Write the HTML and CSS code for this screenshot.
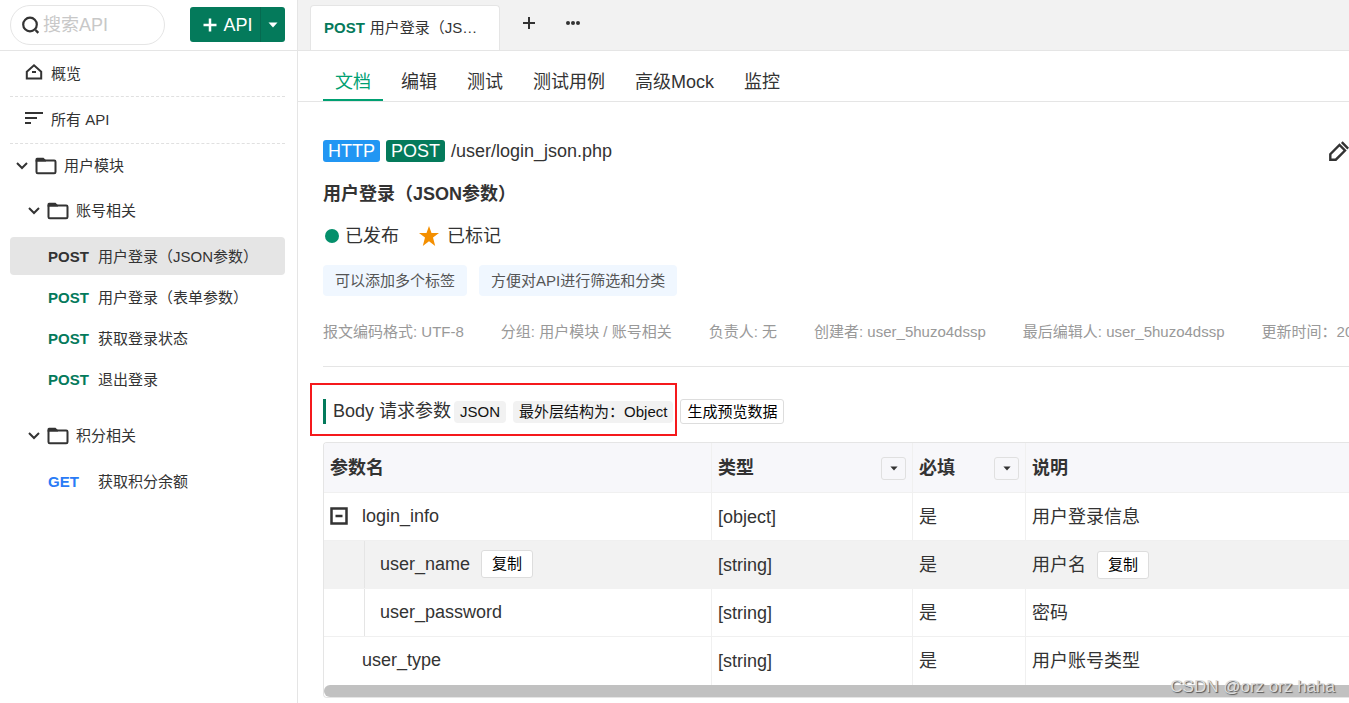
FILE: index.html
```html
<!DOCTYPE html>
<html lang="zh-CN">
<head>
<meta charset="utf-8">
<title>用户登录（JSON参数）</title>
<link rel="stylesheet" href="styles.css">
</head>
<body>
<svg class="sprite" aria-hidden="true">
  <symbol id="chevron" viewBox="0 0 12 12"><path d="M1 3l5 5 5-5" fill="none" stroke="#333" stroke-width="2"/></symbol>
  <symbol id="folder" viewBox="0 0 22 18"><path d="M1.500 4v11a1.300 1.300 0 0 0 1.300 1.300h16.400a1.300 1.300 0 0 0 1.300-1.300V4.800a1.300 1.300 0 0 0-1.300-1.300H2z" fill="none" stroke="#333" stroke-width="2"/><path d="M.5 4.500V2.200A1.500 1.500 0 0 1 2 .7h6.500l2.500 2.500v1.300z" fill="#333"/></symbol>
  <symbol id="caret" viewBox="0 0 10 6"><path d="M.5.500h9L5 5.500z" fill="currentColor"/></symbol>
</svg>
<div class="app">
  <aside class="sidebar">
    <div class="side-top">
      <label class="search">
        <svg width="19" height="19" viewBox="0 0 19 19"><circle cx="8" cy="8.500" r="6.800" fill="none" stroke="#333" stroke-width="2.200"/><path d="M13.500 14l2.800 2.800" stroke="#333" stroke-width="2.400"/></svg>
        <input type="text" placeholder="搜索API" aria-label="搜索API">
      </label>
      <div class="add">
        <button class="add-main" type="button"><svg width="14" height="14" viewBox="0 0 14 14"><path d="M7 .5v13M.5 7h13" stroke="#fff" stroke-width="2.500"/></svg>API</button>
        <button class="add-more" type="button" aria-label="更多"><svg width="10" height="6"><use href="#caret"/></svg></button>
      </div>
    </div>
    <nav class="tree">
      <a class="link" href="#"><svg width="18" height="18" viewBox="0 0 18 18"><path d="M1.800 8.700L9 2.300l7.200 6.400V15.500H1.800z" fill="none" stroke="#333" stroke-width="2"/><path d="M7 9h4" stroke="#333" stroke-width="2"/></svg>概览</a>
      <a class="link" href="#"><svg width="18" height="18" viewBox="0 0 18 18"><path d="M0 4h18M0 9h12M0 14h6" stroke="#333" stroke-width="2"/></svg>所有 API</a>
      <a class="group" href="#"><svg width="12" height="12"><use href="#chevron"/></svg><svg width="22" height="18"><use href="#folder"/></svg>用户模块</a>
      <a class="group nested" href="#"><svg width="12" height="12"><use href="#chevron"/></svg><svg width="22" height="18"><use href="#folder"/></svg>账号相关</a>
      <div class="apis">
        <a class="api active" href="#"><b>POST</b>用户登录（JSON参数）</a>
        <a class="api" href="#"><b>POST</b>用户登录（表单参数）</a>
        <a class="api" href="#"><b>POST</b>获取登录状态</a>
        <a class="api" href="#"><b>POST</b>退出登录</a>
      </div>
      <a class="group nested" href="#"><svg width="12" height="12"><use href="#chevron"/></svg><svg width="22" height="18"><use href="#folder"/></svg>积分相关</a>
      <div class="apis">
        <a class="api get" href="#"><b>GET</b>获取积分余额</a>
      </div>
    </nav>
  </aside>
  <main class="main">
    <div class="files">
      <a class="file" href="#"><b>POST</b><span>用户登录（JSON参数）</span></a>
      <button class="icon" type="button" aria-label="新建"><svg width="14" height="14" viewBox="0 0 14 14"><path d="M7 1v12M1 7h12" stroke="#333" stroke-width="2"/></svg></button>
      <button class="icon" type="button" aria-label="更多"><svg width="14" height="4" viewBox="0 0 14 4"><circle cx="2" cy="2" r="2"/><circle cx="7" cy="2" r="2"/><circle cx="12" cy="2" r="2"/></svg></button>
    </div>
    <nav class="tabs">
      <a class="tab on" href="#">文档</a><a class="tab" href="#">编辑</a><a class="tab" href="#">测试</a><a class="tab" href="#">测试用例</a><a class="tab" href="#">高级Mock</a><a class="tab" href="#">监控</a>
    </nav>
    <section class="doc">
      <div class="url">
        <span class="badge http">HTTP</span><span class="badge">POST</span><span>/user/login_json.php</span>
        <button class="edit" type="button" aria-label="编辑"><svg width="20" height="20" viewBox="0 0 20 20"><path d="M1.300 18.700v-5.500l9.200-9.200 5.500 5.500-9.200 9.200zM12.800 1.200l6.400 6.400" fill="none" stroke="#333" stroke-width="2.400"/></svg></button>
      </div>
      <h1 class="title">用户登录（JSON参数）</h1>
      <div class="status">
        <span class="dot"></span><span>已发布</span>
        <svg class="star" width="20" height="20" viewBox="0 0 20 20"><path d="M10 0l2.500 7H20l-6 4.600L16.200 20 10 15.200 3.800 20 6 11.600 0 7h7.500z" fill="#f48f00"/></svg><span>已标记</span>
      </div>
      <div class="labels"><span class="label">可以添加多个标签</span><span class="label">方便对API进行筛选和分类</span></div>
      <div class="meta"><span>报文编码格式: UTF-8</span><span>分组: 用户模块 / 账号相关</span><span>负责人: 无</span><span>创建者: user_5huzo4dssp</span><span>最后编辑人: user_5huzo4dssp</span><span>更新时间：20</span></div>
      <div class="body-head">
        <h2 class="body-title">Body 请求参数</h2>
        <span class="chip">JSON</span><span class="chip">最外层结构为：Object</span>
        <button class="btn preview" type="button">生成预览数据</button>
        <div class="mark"></div>
      </div>
      <div class="grid">
        <table>
          <thead><tr>
            <th class="c-name">参数名</th>
            <th class="c-type"><div class="th">类型<button class="filter" type="button" aria-label="筛选类型"><svg width="8" height="5"><use href="#caret"/></svg></button></div></th>
            <th class="c-req"><div class="th">必填<button class="filter" type="button" aria-label="筛选必填"><svg width="8" height="5"><use href="#caret"/></svg></button></div></th>
            <th>说明</th>
          </tr></thead>
          <tbody>
            <tr><td><div class="name"><button class="fold" type="button" aria-label="收起"><svg width="18" height="18" viewBox="0 0 18 18"><path d="M1.500 1.500h15v15h-15z" fill="none" stroke="#333" stroke-width="2.500"/><path d="M5.500 9h7" stroke="#333" stroke-width="2.500"/></svg></button>login_info</div></td><td>[object]</td><td>是</td><td>用户登录信息</td></tr>
            <tr class="hover"><td class="child"><div class="inner">user_name<button class="btn copy" type="button">复制</button></div></td><td>[string]</td><td>是</td><td><div class="value">用户名<button class="btn copy" type="button">复制</button></div></td></tr>
            <tr><td class="child"><div class="inner">user_password</div></td><td>[string]</td><td>是</td><td>密码</td></tr>
            <tr><td><div class="name leaf">user_type</div></td><td>[string]</td><td>是</td><td>用户账号类型</td></tr>
          </tbody>
        </table>
        <div class="scroll"></div>
      </div>
    </section>
  </main>
  <div class="watermark">CSDN @orz orz haha</div>
</div>
</body>
</html>
```
FILE: styles.css
```css
* { box-sizing: border-box; }
body {
  margin: 0;
  font: 15px/22px "Liberation Sans", "Noto Sans CJK SC", sans-serif;
  color: #333;
  background: #fff;
}
a { color: inherit; text-decoration: none; }
button, input { font: inherit; color: inherit; margin: 0; padding: 0; border: 0; background: none; }
button { display: flex; align-items: center; justify-content: center; cursor: pointer; }
svg { flex: none; display: block; }
.sprite { position: absolute; width: 0; height: 0; }
.app { position: relative; display: flex; min-height: 100vh; overflow: hidden; }

.sidebar { flex: none; width: 298px; border-right: 1px solid #e5e5e5; }
.side-top { display: flex; justify-content: space-between; align-items: flex-start; height: 51px; padding: 5px 12px 0 10px; border-bottom: 1px solid #e5e5e5; }
.search { display: flex; align-items: center; gap: 2px; width: 155px; height: 40px; padding-left: 11px; border: 1px solid #e5e5e5; border-radius: 20px; font-size: 18px; }
.search input { width: 100px; outline: 0; }
.search input::placeholder { color: #c8c8c8; opacity: 1; }
.add { display: flex; height: 35px; margin-top: 2px; border-radius: 3px; overflow: hidden; background: #047a5b; color: #fff; font-size: 18px; }
.add-main { width: 71px; gap: 6px; padding-left: 6px; border-right: 1px solid #066a50; }
.add-more { width: 24px; }

.link { display: flex; align-items: center; gap: 8px; height: 46px; margin: 0 12px 0 10px; padding-left: 15px; border-bottom: 1px dashed #e0e0e0; }
.link + .link { height: 47px; }
.link svg { margin-bottom: 4px; }
.group { display: flex; align-items: center; gap: 7px; height: 45px; padding: 0 0 2px 16px; }
.nested { padding-left: 28px; }
.apis { display: grid; gap: 3px; padding: 3px 12px 16px 10px; }
.api { display: flex; align-items: center; height: 38px; padding: 1px 0 0 38px; border-radius: 4px; }
.api b { width: 50px; color: #047a5b; }
.api.active { background: #e5e5e5; }
.api.active b { color: #333; }
.api.get b { color: #2a7bf6; }

.main { flex: 1; min-width: 0; }
.files { display: flex; align-items: flex-end; height: 51px; padding-left: 12px; background: #f2f2f2; border-bottom: 1px solid #e5e5e5; }
.file { display: flex; align-items: center; gap: 5px; width: 190px; height: 45px; padding: 0 20px 0 13px; background: #fff; border: 1px solid #e5e5e5; border-bottom: 0; border-radius: 4px 4px 0 0; }
.file b { color: #047a5b; }
.file span { overflow: hidden; white-space: nowrap; text-overflow: ellipsis; }
.icon { width: 44px; height: 54px; color: #333; fill: currentColor; }
.icon:nth-of-type(1) { margin-left: 7px; }
.tabs { display: flex; gap: 6px; height: 51px; padding-left: 25px; border-bottom: 1px solid #e5e5e5; font-size: 18px; }
.tab { display: flex; align-items: center; padding: 13px 12px 0; border-bottom: 2px solid transparent; }
.tab.on { color: #00a072; border-color: #00a072; }

.doc { padding-left: 25px; font-size: 18px; }
.url { display: flex; align-items: center; gap: 6px; padding-top: 38px; }
.badge { padding: 0 5px; border-radius: 3px; background: #047a5b; color: #fff; }
.http { background: #2196f3; }
.edit { margin-left: auto; }
.title { margin: 21px 0 0; font-size: 18px; line-height: 22px; }
.status { display: flex; align-items: center; gap: 6px; padding-top: 20px; }
.dot { width: 14px; height: 14px; margin-left: 2px; border-radius: 50%; background: #048f6b; }
.star { margin: 0 2px 0 14px; }
.labels { display: flex; gap: 12px; padding-top: 18px; font-size: 15px; }
.label { padding: 5px 12px 4px; border-radius: 4px; background: #f0f7ff; color: #555; }
.meta { display: flex; gap: 37px; padding: 25px 0 23px; border-bottom: 1px solid #e5e5e5; overflow: hidden; white-space: nowrap; font-size: 15px; color: #999; }
.body-head { position: relative; display: flex; align-items: center; gap: 7px; padding: 32px 0 18px; font-size: 15px; color: #111; }
.body-title { margin: 0 -4px 0 0; padding-left: 7px; border-left: 3px solid #047a5b; font-size: 18px; line-height: 25px; font-weight: 400; color: #333; }
.chip { padding: 0 6px; border-radius: 4px; background: #f2f2f2; }
.btn { border: 1px solid #ddd; border-radius: 3px; background: #fff; color: #000; font-size: 15px; }
.preview { height: 25px; padding: 0 6px; }
.mark { position: absolute; left: -13px; top: 16px; width: 367px; height: 53px; border: 2px solid #f5191c; }

.grid { border: 1px solid #e5e5e5; border-right: 0; border-radius: 4px 0 0 4px; overflow: hidden; }
table { width: 100%; table-layout: fixed; border-collapse: separate; border-spacing: 0; }
th, td { height: 48px; padding: 0 6px; text-align: left; border-right: 1px solid #f0f0f0; border-bottom: 1px solid #f0f0f0; }
th { height: 50px; padding-top: 1px; background: #f7f7fa; }
th:last-child, td:last-child { border-right: 0; }
tr:last-child td { border-bottom: 0; }
.c-name { width: 388px; }
.c-type { width: 201px; }
.c-req { width: 113px; }
.th { display: flex; align-items: center; justify-content: space-between; }
.filter { width: 25px; height: 23px; border: 1px solid #e0e0e0; border-radius: 3px; }
.name { display: flex; align-items: center; gap: 14px; padding-bottom: 2px; }
.leaf { padding-left: 32px; }
.child { padding: 0 0 0 40px; }
.inner { display: flex; align-items: center; height: 47px; padding: 0 0 2px 15px; border-left: 1px solid #e5e5e5; }
.value { display: flex; align-items: center; }
.hover td { background: #f2f2f2; border-color: #f2f2f2; }
.hover .inner { border-color: #e5e5e5; }
.copy { width: 52px; height: 28px; margin-left: 11px; }
.scroll { height: 12px; border-radius: 6px 0 0 6px; background: #c1c1c1; }
.watermark { position: absolute; right: 14px; bottom: 5px; font-size: 17px; color: #ddd; text-shadow: 1px 1px 1px #555; }
```
